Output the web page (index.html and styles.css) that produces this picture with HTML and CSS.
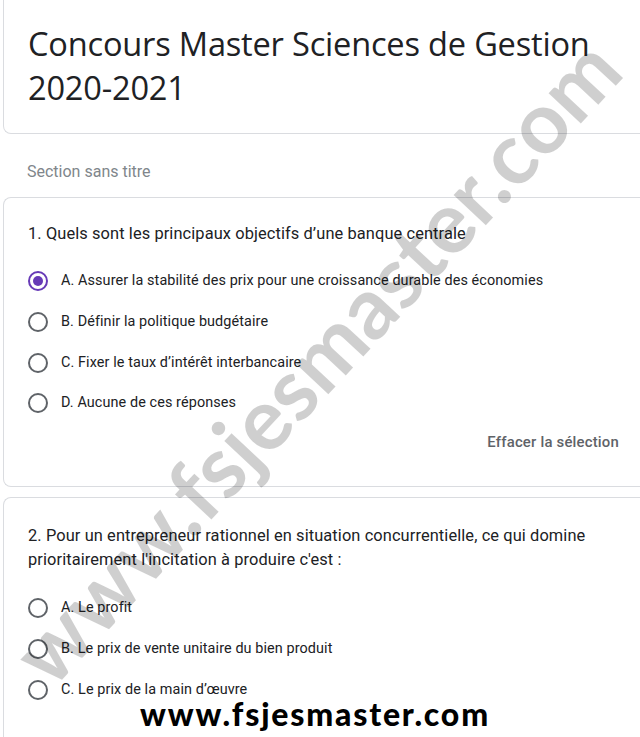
FILE: index.html
```html
<!DOCTYPE html>
<html lang="fr">
<head>
<meta charset="utf-8">
<title>Concours Master Sciences de Gestion 2020-2021</title>
<link rel="stylesheet" href="styles.css">
</head>
<body>
<div class="page">
  <div class="card card-title">
    <h1 class="form-title">Concours Master Sciences de Gestion 2020-2021</h1>
  </div>
  <div class="section-label">Section sans titre</div>

  <div class="card card-q1">
    <div class="question">1. Quels sont les principaux objectifs d’une banque centrale</div>
    <div class="options">
      <div class="option"><span class="radio checked"></span><span class="opt-text">A. Assurer la stabilité des prix pour une croissance durable des économies</span></div>
      <div class="option"><span class="radio"></span><span class="opt-text">B. Définir la politique budgétaire</span></div>
      <div class="option"><span class="radio"></span><span class="opt-text">C. Fixer le taux d’intérêt interbancaire</span></div>
      <div class="option"><span class="radio"></span><span class="opt-text">D. Aucune de ces réponses</span></div>
    </div>
    <div class="clear-row"><span class="clear-btn">Effacer la sélection</span></div>
  </div>

  <div class="card card-q2">
    <div class="question">2. Pour un entrepreneur rationnel en situation concurrentielle, ce qui domine prioritairement l'incitation à produire c'est :</div>
    <div class="options">
      <div class="option"><span class="radio"></span><span class="opt-text">A. Le profit</span></div>
      <div class="option"><span class="radio"></span><span class="opt-text">B. Le prix de vente unitaire du bien produit</span></div>
      <div class="option"><span class="radio"></span><span class="opt-text">C. Le prix de la main d’œuvre</span></div>
    </div>
  </div>

  <div class="watermark">www.fsjesmaster.com</div>
  <div class="site-stamp">www.fsjesmaster.com</div>
</div>
</body>
</html>
```

FILE: styles.css
```css
html, body {
  margin: 0;
  padding: 0;
  background: #ffffff;
}
body {
  width: 640px;
  height: 737px;
  overflow: hidden;
  font-family: Roboto, "Liberation Sans", sans-serif;
  color: #202124;
}
.page {
  position: relative;
  height: 737px;
  padding-left: 3px;
  overflow: hidden;
}
.card {
  box-sizing: border-box;
  width: 640px;
  border: 1px solid #dadce0;
  border-right: none;
  border-radius: 8px 0 0 8px;
  background: #fff;
  padding: 0 24px 0 24px;
}
.card-title {
  margin-top: -10px;
  padding-top: 31px;
  padding-bottom: 22px;
  height: 144px;
}
.form-title {
  margin: 0;
  font-family: "Open Sans", Roboto, sans-serif;
  font-weight: 400;
  font-size: 32.6px;
  line-height: 44px;
  letter-spacing: -0.2px;
  color: #202124;
  width: 580px;
}
.section-label {
  height: 63px;
  box-sizing: border-box;
  padding: 26px 0 0 24px;
  font-size: 16px;
  line-height: 24px;
  color: #80868b;
}
.card-q1 {
  height: 290px;
  padding-top: 24px;
}
.card-q2 {
  margin-top: 10px;
  height: 250px;
  padding-top: 26px;
}
.question {
  font-size: 16.4px;
  line-height: 24px;
  color: #202124;
  letter-spacing: 0.1px;
}
.options {
  margin-top: 15px;
}
.card-q2 .options {
  margin-top: 16px;
}
.option {
  display: flex;
  align-items: center;
  height: 40.7px;
}
.radio {
  box-sizing: border-box;
  width: 20px;
  height: 20px;
  border: 2px solid #5f6368;
  border-radius: 50%;
  margin-left: 0;
  margin-right: 13px;
  flex: none;
  position: relative;
}
.radio.checked {
  border-color: #673ab7;
}
.radio.checked::after {
  content: "";
  position: absolute;
  left: 3px;
  top: 3px;
  width: 10px;
  height: 10px;
  border-radius: 50%;
  background: #673ab7;
}
.opt-text {
  font-size: 14.4px;
  line-height: 20px;
  color: #202124;
  letter-spacing: 0.1px;
}
.clear-row {
  display: flex;
  justify-content: flex-end;
  margin-top: 6px;
}
.clear-btn {
  font-size: 14.9px;
  font-weight: 500;
  line-height: 24px;
  color: #5f6368;
  letter-spacing: 0.2px;
}
.watermark {
  position: absolute;
  left: 315px;
  top: 360px;
  transform: translate(-50%, -50%) rotate(-47deg);
  white-space: nowrap;
  font-family: Lato, "DejaVu Sans", sans-serif;
  font-weight: 700;
  font-size: 86px;
  line-height: 1;
  color: rgba(0, 0, 0, 0.19);
  pointer-events: none;
}
.site-stamp {
  position: absolute;
  left: 140px;
  top: 696px;
  white-space: nowrap;
  font-family: Lato, "DejaVu Sans", sans-serif;
  font-weight: 900;
  font-size: 32px;
  line-height: 36px;
  letter-spacing: 1.8px;
  color: #000;
}
```
